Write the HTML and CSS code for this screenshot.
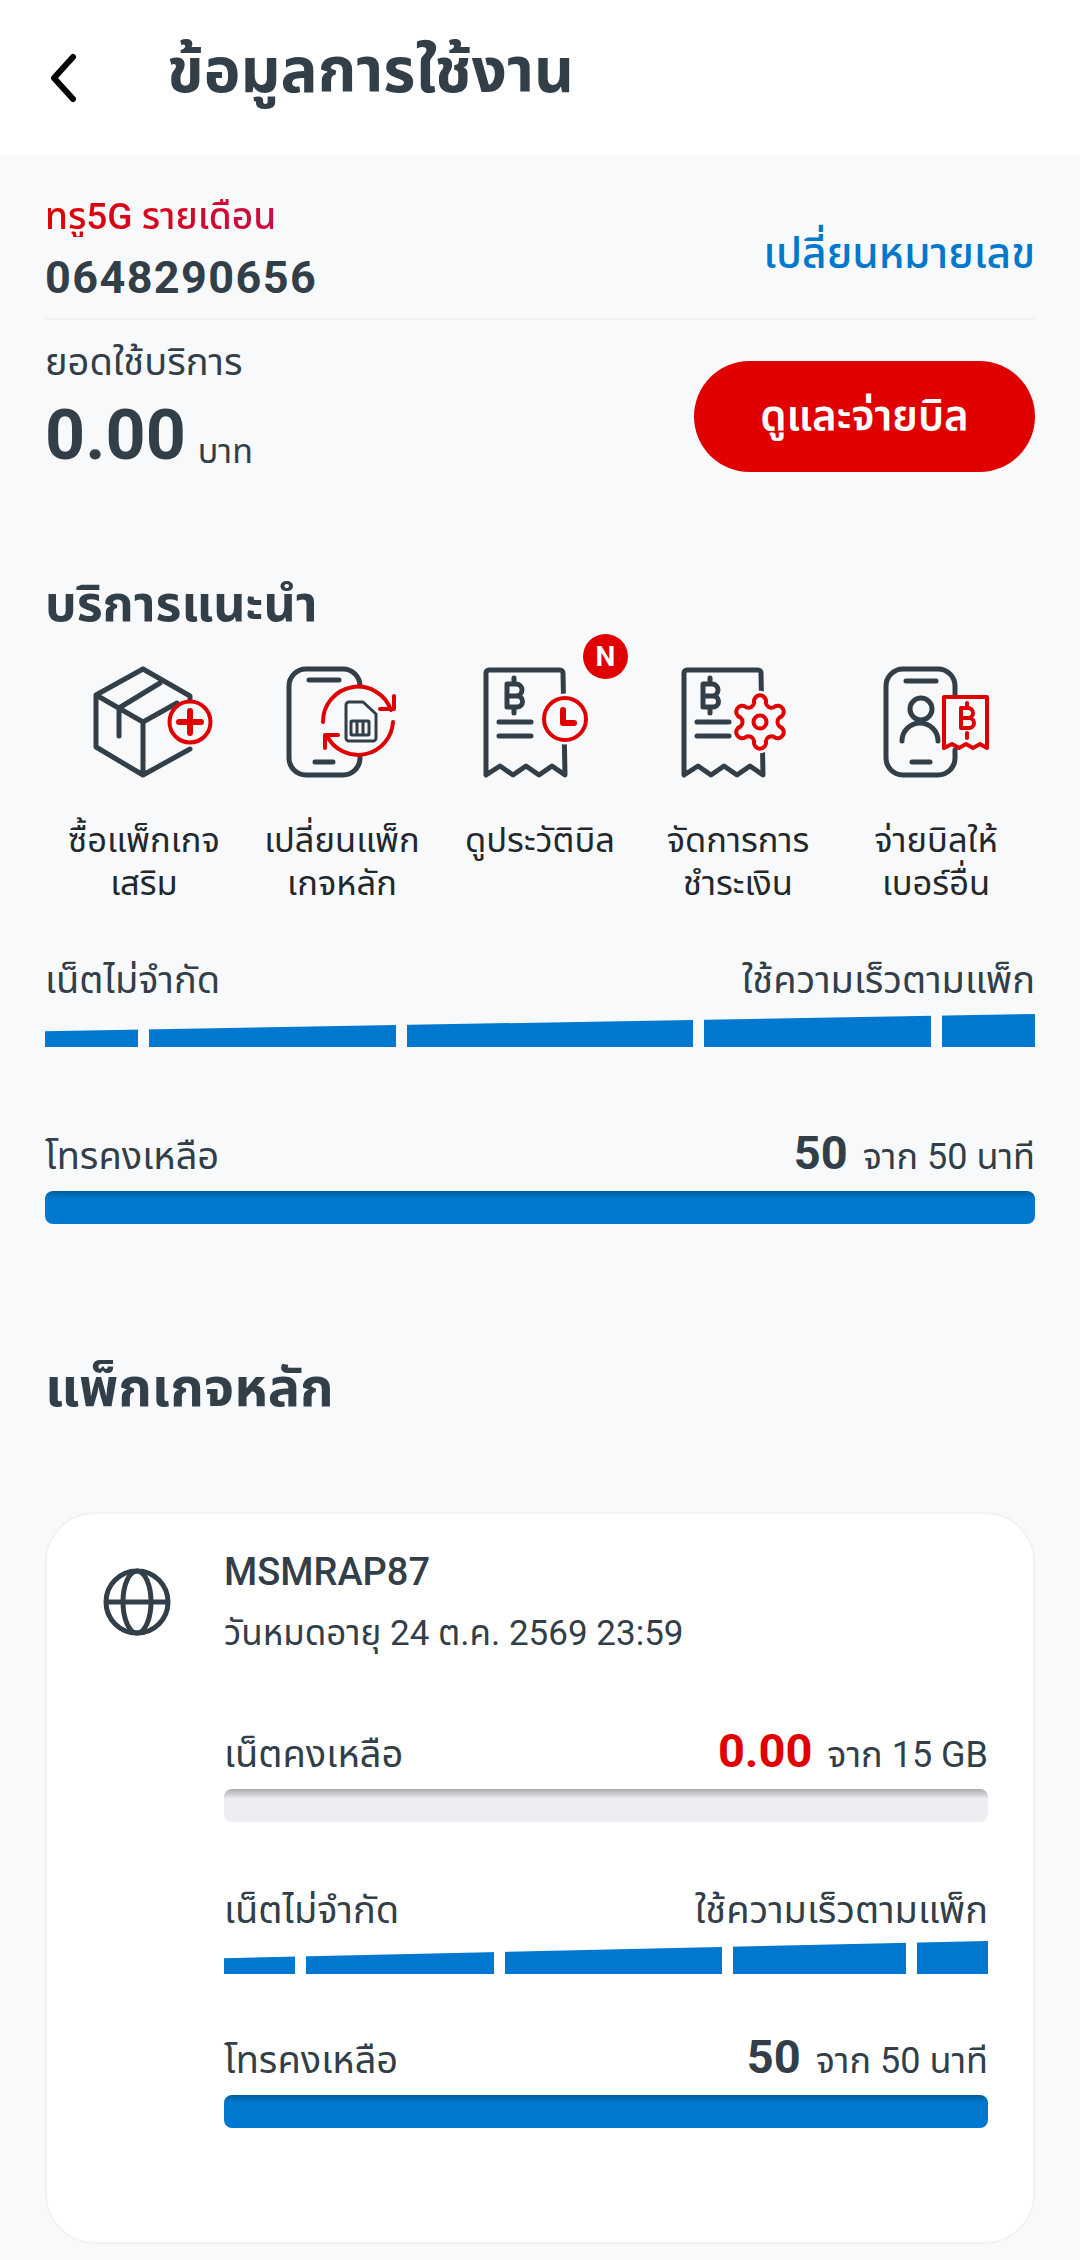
FILE: index.html
```html
<!DOCTYPE html>
<html lang="th">
<head>
<meta charset="utf-8">
<title>ข้อมูลการใช้งาน</title>
<link rel="stylesheet" href="styles.css">
</head>
<body>
<header class="topbar">
  <svg class="back" width="30" height="50" viewBox="0 0 30 50"><path d="M25 4 6 25l19 21" fill="none" stroke="#000" stroke-width="6" stroke-linecap="round" stroke-linejoin="round"/></svg>
  <h1 class="title">ข้อมูลการใช้งาน</h1>
</header>
<main class="page">
  <section class="account">
    <div class="account-id">
      <div class="plan">ทรู5G รายเดือน</div>
      <div class="msisdn">0648290656</div>
    </div>
    <a class="change">เปลี่ยนหมายเลข</a>
  </section>
  <section class="billing">
    <div>
      <div class="billing-label">ยอดใช้บริการ</div>
      <div class="amount"><b>0.00</b><span>บาท</span></div>
    </div>
    <button class="pay">ดูและจ่ายบิล</button>
  </section>

  <h2 class="section-title">บริการแนะนำ</h2>
  <div class="services">
    <div class="service">
      <svg class="icon" viewBox="74 660 140 124">
        <g class="dk"><path d="M143 669 96 695v52l47 28 47-26M143 669l47 27v5M96 695l47 27 34-19M119 708l41-25M119 708v28M143 722v53"/></g>
        <circle class="rd bgf" cx="190" cy="722" r="20.5"/>
        <path class="rd thick" d="M190 711v22M179 722h22"/>
      </svg>
      <div class="label">ซื้อแพ็กเกจ<br>เสริม</div>
    </div>
    <div class="service">
      <svg class="icon" viewBox="272 660 140 124">
        <g class="dk"><path d="M360 686v0a17 17 0 0 0-17-17h-37a17 17 0 0 0-17 17v72a17 17 0 0 0 17 17h37a17 17 0 0 0 17-17M309 680h30M315 762h18"/></g>
        <path class="rd" d="M323 722a35 35 0 0 1 68-12M394 696v13h-14M393 722a35 35 0 0 1-66 14M325 748v-13h13"/>
        <g class="dk thin"><path d="M349 702h14l13 12v24a3 3 0 0 1-3 3h-24a3 3 0 0 1-3-3v-33a3 3 0 0 1 3-3zM352 721h16a1 1 0 0 1 1 1v12a1 1 0 0 1-1 1h-16a1 1 0 0 1-1-1v-12a1 1 0 0 1 1-1zM357 721v14M363 721v14"/></g>
      </svg>
      <div class="label">เปลี่ยนแพ็ก<br>เกจหลัก</div>
    </div>
    <div class="service">
      <svg class="icon" viewBox="470 660 140 124">
        <g class="dk"><path d="M565 775l-13-9-13 9-13-9-13 9-13-9-14 9V673a3 3 0 0 1 3-3h71a3 3 0 0 1 3 3zM499 722h32M499 736h32M514 678v6M514 707v6M507 684h9a6 6 0 0 1 0 12h1a5.500 5.500 0 0 1 0 11h-10zM507 696h9"/></g>
        <circle class="rd bgf halo" cx="565" cy="719" r="21"/>
        <circle class="rd bgf" cx="565" cy="719" r="21"/>
        <path class="rd thick" d="M563 710v13h11"/>
      </svg>
      <div class="label">ดูประวัติบิล</div>
      <span class="badge">N</span>
    </div>
    <div class="service">
      <svg class="icon" viewBox="668 660 140 124">
        <g class="dk"><path d="M763 775l-13-9-13 9-13-9-13 9-13-9-14 9V673a3 3 0 0 1 3-3h71a3 3 0 0 1 3 3zM697 722h32M697 736h32M710 678v6M710 707v6M703 684h9a6 6 0 0 1 0 12h1a5.500 5.500 0 0 1 0 11h-10zM703 696h9"/></g>
        <path class="rd bgf halo" d="M754.200 702.900A6 6 0 1 1 765.800 702.900A6 6 0 0 0 773.600 707.400A6 6 0 1 1 779.500 717.500A6 6 0 0 0 779.500 726.500A6 6 0 1 1 773.600 736.600A6 6 0 0 0 765.800 741.100A6 6 0 1 1 754.200 741.100A6 6 0 0 0 746.400 736.600A6 6 0 1 1 740.500 726.500A6 6 0 0 0 740.500 717.500A6 6 0 1 1 746.400 707.400A6 6 0 0 0 754.200 702.900Z"/>
        <path class="rd bgf" d="M754.200 702.900A6 6 0 1 1 765.800 702.900A6 6 0 0 0 773.600 707.400A6 6 0 1 1 779.500 717.500A6 6 0 0 0 779.500 726.500A6 6 0 1 1 773.600 736.600A6 6 0 0 0 765.800 741.100A6 6 0 1 1 754.200 741.100A6 6 0 0 0 746.400 736.600A6 6 0 1 1 740.500 726.500A6 6 0 0 0 740.500 717.500A6 6 0 1 1 746.400 707.400A6 6 0 0 0 754.200 702.900Z"/>
        <circle class="rd" cx="760" cy="722" r="6.500"/>
      </svg>
      <div class="label">จัดการการ<br>ชำระเงิน</div>
    </div>
    <div class="service">
      <svg class="icon" viewBox="866 660 140 124">
        <g class="dk"><path d="M955 695v-9a17 17 0 0 0-17-17h-35a17 17 0 0 0-17 17v72a17 17 0 0 0 17 17h35a17 17 0 0 0 17-17v-8M906 681h30M912 762h18"/><circle cx="921" cy="709" r="11"/><path d="M902 741a18 18 0 0 1 36 0"/></g>
        <path class="rd bgf" d="M944 697h43v51l-7-4-7 4-7-4-7 4-7-4-8 4z"/>
        <path class="rd" d="M967 703v5M967 733v5M961 708h7a5 5 0 0 1 0 10h1a5 5 0 0 1 0 10h-8zM961 718h7"/>
      </svg>
      <div class="label">จ่ายบิลให้<br>เบอร์อื่น</div>
    </div>
  </div>

  <div class="usage first">
    <div class="usage-head"><span>เน็ตไม่จำกัด</span><span>ใช้ความเร็วตามแพ็ก</span></div>
    <div class="speed"><i class="s1"></i><i class="s2"></i><i class="s3"></i><i class="s4"></i><i class="s5"></i></div>
  </div>
  <div class="usage second">
    <div class="usage-head"><span>โทรคงเหลือ</span><span class="value"><b>50</b> จาก 50 นาที</span></div>
    <div class="bar"></div>
  </div>

  <h2 class="package-title">แพ็กเกจหลัก</h2>

  <article class="card">
    <svg class="globe" width="68" height="68" viewBox="0 0 68 68"><g fill="none" stroke="#323e48" stroke-width="5"><circle cx="34" cy="34" r="31"/><ellipse cx="34" cy="34" rx="14" ry="31"/><path d="M3 34h62"/></g></svg>
    <div class="card-body">
      <div class="pack-name">MSMRAP87</div>
      <div class="pack-date">วันหมดอายุ 24 ต.ค. 2569 23:59</div>
      <div class="usage inner-a">
        <div class="usage-head"><span>เน็ตคงเหลือ</span><span class="value"><b class="red">0.00</b> จาก 15 GB</span></div>
        <div class="bar empty"></div>
      </div>
      <div class="usage inner-b">
        <div class="usage-head"><span>เน็ตไม่จำกัด</span><span>ใช้ความเร็วตามแพ็ก</span></div>
        <div class="speed"><i class="s1"></i><i class="s2"></i><i class="s3"></i><i class="s4"></i><i class="s5"></i></div>
      </div>
      <div class="usage inner-c">
        <div class="usage-head"><span>โทรคงเหลือ</span><span class="value"><b>50</b> จาก 50 นาที</span></div>
        <div class="bar"></div>
      </div>
    </div>
  </article>
</main>
</body>
</html>
```
FILE: styles.css
```css
* { box-sizing: border-box; }
html, body { margin: 0; padding: 0; }
body {
  width: 1080px;
  height: 2260px;
  overflow: hidden;
  background: #f8f9fb;
  color: #323e48;
  font-family: Roboto, "Noto Sans Thai", "Noto Sans", sans-serif;
}
.topbar {
  height: 155px;
  background: #fff;
  display: flex;
  align-items: center;
  padding-left: 48px;
  gap: 89px;
}
.title { margin: 0 0 14px; font-size: 62px; font-weight: 700; line-height: 70px; }
.back { flex: none; }
.page { padding: 37px 45px 0; }
.account {
  display: flex;
  justify-content: space-between;
  align-items: center;
  height: 128px;
  border-bottom: 2px solid #f1f2f4;
}
.account-id { margin-top: -7px; }
.plan {
  font-size: 37px;
  font-weight: 500;
  line-height: 40px;
  background: linear-gradient(90deg, #e00000, #c8104e);
  -webkit-background-clip: text;
  background-clip: text;
  color: transparent;
}
.msisdn { font-size: 45px; font-weight: 700; line-height: 56px; margin-top: 13px; letter-spacing: 1.400px; }
.change { font-size: 42.500px; font-weight: 500; color: #0078cc; }
.billing {
  display: flex;
  justify-content: space-between;
  align-items: flex-start;
  height: 254px;
  padding-top: 20px;
}
.billing-label { font-size: 38px; line-height: 44px; }
.amount { display: flex; align-items: baseline; gap: 12px; margin-top: 9px; }
.amount b { font-size: 70px; line-height: 84px; font-weight: 700; }
.amount span { font-size: 34px; transform: translateY(4px); }
.pay {
  width: 341px;
  height: 111px;
  margin-top: 21px;
  border: 0;
  border-radius: 56px;
  background: #e00000;
  color: #fff;
  font: 600 42px Roboto, "Noto Sans Thai", "Noto Sans", sans-serif;
}
.section-title { margin: 0; font-size: 50px; font-weight: 700; line-height: 60px; }
.services { display: grid; grid-template-columns: repeat(5, 1fr); margin-top: 26px; }
.service { position: relative; display: flex; flex-direction: column; align-items: center; }
.icon { width: 140px; height: 124px; display: block; }
.label { margin-top: 35px; font-size: 34.500px; line-height: 42.500px; text-align: center; height: 85px; color: #23282d; white-space: nowrap; }
.dk path, .dk circle, .dk ellipse { fill: none; stroke: #323e48; stroke-width: 5; stroke-linecap: round; stroke-linejoin: round; }
.dk.thin path { stroke-width: 3; }
.rd { fill: none; stroke: #e00000; stroke-width: 4; stroke-linecap: round; stroke-linejoin: round; }
.rd.thick { stroke-width: 6; }
.rd.bgf { fill: #f8f9fb; }
.rd.halo { stroke: #f8f9fb; stroke-width: 9; }
.badge {
  position: absolute;
  left: 142px;
  top: -26px;
  width: 45px;
  height: 45px;
  border-radius: 50%;
  background: #e00000;
  color: #fff;
  font-size: 28px;
  font-weight: 700;
  line-height: 45px;
  text-align: center;
}
.usage-head {
  display: flex;
  justify-content: space-between;
  align-items: baseline;
  font-size: 38px;
  font-weight: 400;
  line-height: 44px;
  white-space: nowrap;
}
.value { font-size: 36px; }
.value b { font-size: 47px; font-weight: 700; margin-right: 6px; }
.value b.red { color: #e00000; }
.first { margin-top: 54px; }
.second { margin-top: 84px; }
.speed {
  display: flex;
  gap: 11px;
  height: 33px;
  margin-top: 12px;
  clip-path: polygon(0 52%, 100% 0, 100% 100%, 0 100%);
}
.speed i { display: block; height: 100%; background: #0078d0; }
.s1 { flex: 93; }
.s2 { flex: 247; }
.s3 { flex: 286; }
.s4 { flex: 227; }
.s5 { flex: 93; }
.bar {
  height: 33px;
  margin-top: 12px;
  border-radius: 8px;
  background: linear-gradient(#00609f, #0078d0 8px);
}
.bar.empty { background: linear-gradient(#a9abaf, #eceef1 10px); }
.package-title { margin: 132px 0 0; font-size: 54px; font-weight: 700; line-height: 64px; }
.card {
  display: flex;
  height: 732px;
  margin-top: 92px;
  padding: 36px 45px 0 56px;
  background: #fff;
  border: 2px solid #f1f2f4;
  border-radius: 50px;
}
.globe { flex: none; margin-top: 18px; }
.card-body { flex: 1; margin-left: 53px; }
.pack-name { font-size: 38px; font-weight: 500; line-height: 44px; }
.pack-date { font-size: 35px; line-height: 44px; margin-top: 18px; }
.inner-a { margin-top: 73px; }
.inner-b { margin-top: 66px; }
.inner-b .speed { margin-top: 9px; }
.inner-c { margin-top: 61px; }
```
